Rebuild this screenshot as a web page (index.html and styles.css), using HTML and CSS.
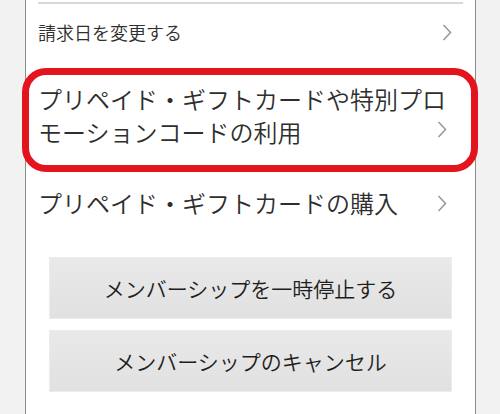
FILE: index.html
```html
<!DOCTYPE html>
<html lang="ja">
<head>
  <meta charset="UTF-8" />
  <meta name="viewport" content="width=device-width, initial-scale=1" />
  <title>メンバーシップ</title>
  <link rel="stylesheet" href="styles.css">
</head>
<body>
  <div class="card">
    <div class="divider"></div>

    <div class="row row-small">
      <div class="label">請求日を変更する</div>
      <svg class="chev" width="10" height="17" viewBox="0 0 10 17"><polyline points="1.5,1 8.5,8.5 1.5,16" /></svg>
    </div>

    <div class="row row-marked">
      <div class="label">プリペイド・ギフトカードや特別プロモーションコードの利用</div>
      <svg class="chev" width="10" height="17" viewBox="0 0 10 17"><polyline points="1.5,1 8.5,8.5 1.5,16" /></svg>
    </div>

    <div class="row row-plain">
      <div class="label">プリペイド・ギフトカードの購入</div>
      <svg class="chev" width="10" height="17" viewBox="0 0 10 17"><polyline points="1.5,1 8.5,8.5 1.5,16" /></svg>
    </div>

    <div class="buttons">
      <div class="btn">メンバーシップを一時停止する</div>
      <div class="btn">メンバーシップのキャンセル</div>
    </div>
  </div>
</body>
</html>
```

FILE: styles.css
```css
body {
  margin: 0;
  background: #f2f2f2;
  font-family: "Noto Sans CJK JP", "Noto Sans", sans-serif;
  font-weight: 350;
  color: #2e2e2e;
}

.card {
  margin-left: 25px;
  width: 425px;
  min-height: 414px;
  padding: 2px 12px 0;
  background: #fff;
  border-left: 1px solid #8c8c8c;
  border-right: 1px solid #8c8c8c;
}

.divider {
  height: 2px;
  background: #d8d8d8;
}

.row {
  display: grid;
  position: relative;
}

.row > * {
  grid-area: 1 / 1;
}

.label {
  align-self: center;
}

.chev {
  justify-self: end;
  align-self: center;
}

.chev polyline {
  fill: none;
  stroke: #9a9a9a;
  stroke-width: 1.6;
}

.row-small {
  height: 60px;
  font-size: 18px;
}

.row-small .label {
  margin-top: -5px;
}

.row-small .chev {
  margin-right: 11px;
  margin-top: -3px;
}

.row-marked {
  height: 89px;
  padding-top: 19px;
  font-size: 24px;
  line-height: 33px;
}

.row-marked .label {
  align-self: start;
  margin-top: -1px;
  width: 412px;
}

.row-marked .chev {
  align-self: start;
  margin-top: 38px;
  margin-right: 16px;
}

.row-marked::after {
  content: "";
  position: absolute;
  top: 4px;
  bottom: 0;
  left: -16px;
  right: -15px;
  border: 7px solid #e3141d;
  border-radius: 24px;
}

.row-plain {
  height: 66px;
  font-size: 24px;
}

.row-plain .label {
  margin-top: -6px;
}

.row-plain .chev {
  margin-right: 16px;
  margin-top: -4px;
}

.buttons {
  display: flex;
  flex-direction: column;
  gap: 11px;
  padding: 19px 11px 0;
}

.btn {
  height: 62px;
  display: flex;
  align-items: center;
  justify-content: center;
  font-size: 21px;
  color: #1e1e1e;
  background: linear-gradient(to bottom, #e9e9e9, #e1e1e1);
  border: 1px solid #ececec;
  box-sizing: border-box;
}
```
